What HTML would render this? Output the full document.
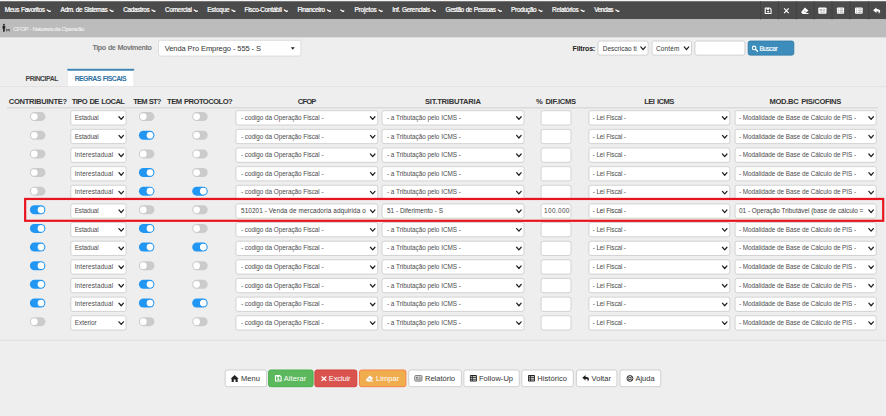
<!DOCTYPE html>
<html lang="pt-BR"><head><meta charset="utf-8"><title>CFOP - Natureza da Operação</title>
<style>
*{box-sizing:border-box;margin:0;padding:0}
html,body{width:886px;height:416px;overflow:hidden;background:#eee;font-family:"Liberation Sans",sans-serif}
body{position:relative}
#sh{position:absolute;left:0;top:0;width:886px;height:416px}
.t{position:absolute;white-space:nowrap;line-height:1}
</style></head><body>
<svg id="sh" width="886" height="416" viewBox="0 0 886 416">
<rect x="0.00" y="0.00" width="886.00" height="1.25" rx="0" fill="#f6f6f6"/>
<rect x="0.00" y="1.25" width="886.00" height="18.10" rx="0" fill="#4b4b4b"/>
<rect x="0.00" y="19.35" width="886.00" height="18.00" rx="0" fill="#bcbcbc"/>
<path d="M46.70 9.70 L49.40 11.30" stroke="#fff" stroke-width="1.25"/><path d="M50.60 9.90 L50.60 12.10 L47.90 12.10 Z" fill="#fff"/>
<path d="M109.50 9.70 L112.20 11.30" stroke="#fff" stroke-width="1.25"/><path d="M113.40 9.90 L113.40 12.10 L110.70 12.10 Z" fill="#fff"/>
<path d="M151.50 9.70 L154.20 11.30" stroke="#fff" stroke-width="1.25"/><path d="M155.40 9.90 L155.40 12.10 L152.70 12.10 Z" fill="#fff"/>
<path d="M193.70 9.70 L196.40 11.30" stroke="#fff" stroke-width="1.25"/><path d="M197.60 9.90 L197.60 12.10 L194.90 12.10 Z" fill="#fff"/>
<path d="M231.40 9.70 L234.10 11.30" stroke="#fff" stroke-width="1.25"/><path d="M235.30 9.90 L235.30 12.10 L232.60 12.10 Z" fill="#fff"/>
<path d="M283.80 9.70 L286.50 11.30" stroke="#fff" stroke-width="1.25"/><path d="M287.70 9.90 L287.70 12.10 L285.00 12.10 Z" fill="#fff"/>
<path d="M327.00 9.70 L329.70 11.30" stroke="#fff" stroke-width="1.25"/><path d="M330.90 9.90 L330.90 12.10 L328.20 12.10 Z" fill="#fff"/>
<path d="M340.30 9.70 L343.00 11.30" stroke="#fff" stroke-width="1.25"/><path d="M344.20 9.90 L344.20 12.10 L341.50 12.10 Z" fill="#fff"/>
<path d="M378.60 9.70 L381.30 11.30" stroke="#fff" stroke-width="1.25"/><path d="M382.50 9.90 L382.50 12.10 L379.80 12.10 Z" fill="#fff"/>
<path d="M432.00 9.70 L434.70 11.30" stroke="#fff" stroke-width="1.25"/><path d="M435.90 9.90 L435.90 12.10 L433.20 12.10 Z" fill="#fff"/>
<path d="M497.80 9.70 L500.50 11.30" stroke="#fff" stroke-width="1.25"/><path d="M501.70 9.90 L501.70 12.10 L499.00 12.10 Z" fill="#fff"/>
<path d="M538.50 9.70 L541.20 11.30" stroke="#fff" stroke-width="1.25"/><path d="M542.40 9.90 L542.40 12.10 L539.70 12.10 Z" fill="#fff"/>
<path d="M580.60 9.70 L583.30 11.30" stroke="#fff" stroke-width="1.25"/><path d="M584.50 9.90 L584.50 12.10 L581.80 12.10 Z" fill="#fff"/>
<path d="M615.40 9.70 L618.10 11.30" stroke="#fff" stroke-width="1.25"/><path d="M619.30 9.90 L619.30 12.10 L616.60 12.10 Z" fill="#fff"/>
<g transform="translate(764.70 7.40) scale(0.6900 0.6600)"><path d="M0.8 0.8 H7.2 L9.2 2.8 V9.2 H0.8 Z" fill="none" stroke="#fff" stroke-width="1.6" stroke-linejoin="round"/><rect x="2.8" y="1" width="3.6" height="2.6" fill="#fff"/><circle cx="5" cy="6.4" r="1.5" fill="#fff"/></g>
<g transform="translate(783.60 7.90) scale(0.5600 0.5700)"><path d="M0.9 0.9 L9.1 9.1 M9.1 0.9 L0.9 9.1" stroke="#fff" stroke-width="2.2"/></g>
<g transform="translate(801.00 7.60) scale(0.7400 0.6400)"><path d="M5.2 0 L10 4.6 L6.2 8.4 H10 V10 H2.4 L0 7.2 Z" fill="#fff"/><path d="M4.6 4.6 L6.4 6.2 L5.2 7.4 L3.4 5.8 Z" fill="#a8a8a8"/></g>
<g transform="translate(818.30 7.40) scale(0.8200 0.6400)"><rect x="0" y="0" width="10" height="10" rx="1.4" fill="#fff"/><rect x="1.8" y="2.4" width="2.6" height="2.8" fill="#a8a8a8"/><path d="M5.4 3 H8.4 M5.4 5 H8.4 M1.8 7.4 H8.4" stroke="#a8a8a8" stroke-width="1"/></g>
<g transform="translate(836.90 7.40) scale(0.7200 0.6400)"><rect x="0" y="0" width="10" height="10" rx="1.2" fill="#fff"/><path d="M4 2.4 H8.8 M4 5 H8.8 M4 7.6 H8.8" stroke="#a8a8a8" stroke-width="1.3"/><path d="M1.2 2.4 H2.8 M1.2 5 H2.8 M1.2 7.6 H2.8" stroke="#a8a8a8" stroke-width="1.3"/></g>
<g transform="translate(855.00 7.40) scale(0.7700 0.6400)"><rect x="0" y="0" width="10" height="10" rx="1.2" fill="#fff"/><path d="M4 2.4 H8.8 M4 5 H8.8 M4 7.6 H8.8" stroke="#a8a8a8" stroke-width="1.3"/><path d="M1.2 2.4 H2.8 M1.2 5 H2.8 M1.2 7.6 H2.8" stroke="#a8a8a8" stroke-width="1.3"/></g>
<g transform="translate(873.10 7.40) scale(0.7800 0.6600)"><path d="M4.4 0 L0 4.2 L4.4 8.4 V5.9 C6.9 5.9 7.9 6.8 7.2 10 C10.6 7 9.6 2.6 4.4 2.6 Z" fill="#fff"/></g>
<rect x="760.00" y="1.25" width="1.00" height="18.10" rx="0" fill="#434343"/>
<rect x="778.00" y="1.25" width="1.00" height="18.10" rx="0" fill="#434343"/>
<rect x="795.80" y="1.25" width="1.00" height="18.10" rx="0" fill="#434343"/>
<rect x="813.60" y="1.25" width="1.00" height="18.10" rx="0" fill="#434343"/>
<rect x="831.50" y="1.25" width="1.00" height="18.10" rx="0" fill="#434343"/>
<rect x="849.60" y="1.25" width="1.00" height="18.10" rx="0" fill="#434343"/>
<rect x="868.20" y="1.25" width="1.00" height="18.10" rx="0" fill="#434343"/>
<g transform="translate(2 23.8)"><circle cx="1.9" cy="0.9" r="0.9" fill="#222"/><path d="M0.6 2 H3.2 V5 H2.7 V8 H1.1 V5 H0.6 Z" fill="#222"/><path d="M4.6 7.6 V5.2 L5.9 6.8 L7.2 5.2 V7.6" fill="none" stroke="#333" stroke-width="0.7"/></g>
<rect x="158.50" y="40.30" width="142.40" height="15.80" rx="2" fill="#fff" stroke="#dcdcdc" stroke-width="1"/>
<path d="M290.8 47.3 H294.8 L292.8 49.7 Z" fill="#222"/>
<rect x="598.00" y="41.00" width="50.10" height="14.10" rx="2" fill="#fff" stroke="#d2d2d2" stroke-width="1"/>
<path d="M640.85 46.95 L643.10 49.55 L645.35 46.95" fill="none" stroke="#222" stroke-width="1.25" stroke-linecap="round" stroke-linejoin="round"/>
<rect x="652.00" y="41.00" width="39.50" height="14.10" rx="2" fill="#fff" stroke="#d2d2d2" stroke-width="1"/>
<path d="M684.25 46.95 L686.50 49.55 L688.75 46.95" fill="none" stroke="#222" stroke-width="1.25" stroke-linecap="round" stroke-linejoin="round"/>
<rect x="694.90" y="41.00" width="50.00" height="14.10" rx="2" fill="#fff" stroke="#d2d2d2" stroke-width="1"/>
<rect x="748.20" y="41.10" width="45.60" height="14.00" rx="2" fill="#3c8dbc" stroke="#367fa9" stroke-width="1"/>
<g transform="translate(751.6 45.4) scale(1.1)"><circle cx="2.3" cy="2.3" r="1.6" fill="none" stroke="#fff" stroke-width="1"/><path d="M3.5 3.5L5.4 5.4" stroke="#fff" stroke-width="1.2" stroke-linecap="round"/></g>
<rect x="0.00" y="86.00" width="886.00" height="1.00" rx="0" fill="#e2e2e2"/>
<rect x="67.30" y="68.80" width="66.90" height="17.40" rx="0" fill="#fff"/>
<rect x="67.30" y="68.80" width="66.90" height="1.90" rx="0" fill="#3a82b0"/>
<rect x="67.30" y="70.70" width="0.80" height="15.30" rx="0" fill="#e6e6e6"/>
<rect x="133.40" y="70.70" width="0.80" height="15.30" rx="0" fill="#e6e6e6"/>
<rect x="7.00" y="107.00" width="871.00" height="1.60" rx="0" fill="#dcdcdc"/>
<rect x="29.90" y="112.10" width="15.50" height="9.00" rx="4.5" fill="#cbcbcb"/>
<circle cx="34.30" cy="116.60" r="3.35" fill="#fff"/>
<rect x="70.80" y="110.70" width="55.30" height="14.30" rx="2" fill="#fff" stroke="#d2d2d2" stroke-width="1"/>
<path d="M118.95 116.75 L121.20 119.35 L123.45 116.75" fill="none" stroke="#222" stroke-width="1.25" stroke-linecap="round" stroke-linejoin="round"/>
<rect x="138.90" y="112.10" width="15.50" height="9.00" rx="4.5" fill="#cbcbcb"/>
<circle cx="143.30" cy="116.60" r="3.35" fill="#fff"/>
<rect x="192.20" y="112.10" width="15.50" height="9.00" rx="4.5" fill="#cbcbcb"/>
<circle cx="196.60" cy="116.60" r="3.35" fill="#fff"/>
<rect x="235.90" y="110.70" width="141.90" height="14.30" rx="2" fill="#fff" stroke="#d2d2d2" stroke-width="1"/>
<path d="M370.45 116.75 L372.70 119.35 L374.95 116.75" fill="none" stroke="#222" stroke-width="1.25" stroke-linecap="round" stroke-linejoin="round"/>
<rect x="382.00" y="110.70" width="142.00" height="14.30" rx="2" fill="#fff" stroke="#d2d2d2" stroke-width="1"/>
<path d="M516.65 116.75 L518.90 119.35 L521.15 116.75" fill="none" stroke="#222" stroke-width="1.25" stroke-linecap="round" stroke-linejoin="round"/>
<rect x="541.10" y="110.70" width="29.90" height="14.30" rx="2" fill="#fff" stroke="#d2d2d2" stroke-width="1"/>
<rect x="588.90" y="110.70" width="140.90" height="14.30" rx="2" fill="#fff" stroke="#d2d2d2" stroke-width="1"/>
<path d="M722.45 116.75 L724.70 119.35 L726.95 116.75" fill="none" stroke="#222" stroke-width="1.25" stroke-linecap="round" stroke-linejoin="round"/>
<rect x="735.10" y="110.70" width="141.10" height="14.30" rx="2" fill="#fff" stroke="#d2d2d2" stroke-width="1"/>
<path d="M868.85 116.75 L871.10 119.35 L873.35 116.75" fill="none" stroke="#222" stroke-width="1.25" stroke-linecap="round" stroke-linejoin="round"/>
<rect x="29.90" y="130.74" width="15.50" height="9.00" rx="4.5" fill="#cbcbcb"/>
<circle cx="34.30" cy="135.24" r="3.35" fill="#fff"/>
<rect x="70.80" y="129.34" width="55.30" height="14.30" rx="2" fill="#fff" stroke="#d2d2d2" stroke-width="1"/>
<path d="M118.95 135.39 L121.20 137.99 L123.45 135.39" fill="none" stroke="#222" stroke-width="1.25" stroke-linecap="round" stroke-linejoin="round"/>
<rect x="138.90" y="130.74" width="15.50" height="9.00" rx="4.5" fill="#2196f3"/>
<circle cx="150.00" cy="135.24" r="3.35" fill="#fff"/>
<rect x="192.20" y="130.74" width="15.50" height="9.00" rx="4.5" fill="#cbcbcb"/>
<circle cx="196.60" cy="135.24" r="3.35" fill="#fff"/>
<rect x="235.90" y="129.34" width="141.90" height="14.30" rx="2" fill="#fff" stroke="#d2d2d2" stroke-width="1"/>
<path d="M370.45 135.39 L372.70 137.99 L374.95 135.39" fill="none" stroke="#222" stroke-width="1.25" stroke-linecap="round" stroke-linejoin="round"/>
<rect x="382.00" y="129.34" width="142.00" height="14.30" rx="2" fill="#fff" stroke="#d2d2d2" stroke-width="1"/>
<path d="M516.65 135.39 L518.90 137.99 L521.15 135.39" fill="none" stroke="#222" stroke-width="1.25" stroke-linecap="round" stroke-linejoin="round"/>
<rect x="541.10" y="129.34" width="29.90" height="14.30" rx="2" fill="#fff" stroke="#d2d2d2" stroke-width="1"/>
<rect x="588.90" y="129.34" width="140.90" height="14.30" rx="2" fill="#fff" stroke="#d2d2d2" stroke-width="1"/>
<path d="M722.45 135.39 L724.70 137.99 L726.95 135.39" fill="none" stroke="#222" stroke-width="1.25" stroke-linecap="round" stroke-linejoin="round"/>
<rect x="735.10" y="129.34" width="141.10" height="14.30" rx="2" fill="#fff" stroke="#d2d2d2" stroke-width="1"/>
<path d="M868.85 135.39 L871.10 137.99 L873.35 135.39" fill="none" stroke="#222" stroke-width="1.25" stroke-linecap="round" stroke-linejoin="round"/>
<rect x="29.90" y="149.38" width="15.50" height="9.00" rx="4.5" fill="#cbcbcb"/>
<circle cx="34.30" cy="153.88" r="3.35" fill="#fff"/>
<rect x="70.80" y="147.98" width="55.30" height="14.30" rx="2" fill="#fff" stroke="#d2d2d2" stroke-width="1"/>
<path d="M118.95 154.03 L121.20 156.63 L123.45 154.03" fill="none" stroke="#222" stroke-width="1.25" stroke-linecap="round" stroke-linejoin="round"/>
<rect x="138.90" y="149.38" width="15.50" height="9.00" rx="4.5" fill="#cbcbcb"/>
<circle cx="143.30" cy="153.88" r="3.35" fill="#fff"/>
<rect x="192.20" y="149.38" width="15.50" height="9.00" rx="4.5" fill="#cbcbcb"/>
<circle cx="196.60" cy="153.88" r="3.35" fill="#fff"/>
<rect x="235.90" y="147.98" width="141.90" height="14.30" rx="2" fill="#fff" stroke="#d2d2d2" stroke-width="1"/>
<path d="M370.45 154.03 L372.70 156.63 L374.95 154.03" fill="none" stroke="#222" stroke-width="1.25" stroke-linecap="round" stroke-linejoin="round"/>
<rect x="382.00" y="147.98" width="142.00" height="14.30" rx="2" fill="#fff" stroke="#d2d2d2" stroke-width="1"/>
<path d="M516.65 154.03 L518.90 156.63 L521.15 154.03" fill="none" stroke="#222" stroke-width="1.25" stroke-linecap="round" stroke-linejoin="round"/>
<rect x="541.10" y="147.98" width="29.90" height="14.30" rx="2" fill="#fff" stroke="#d2d2d2" stroke-width="1"/>
<rect x="588.90" y="147.98" width="140.90" height="14.30" rx="2" fill="#fff" stroke="#d2d2d2" stroke-width="1"/>
<path d="M722.45 154.03 L724.70 156.63 L726.95 154.03" fill="none" stroke="#222" stroke-width="1.25" stroke-linecap="round" stroke-linejoin="round"/>
<rect x="735.10" y="147.98" width="141.10" height="14.30" rx="2" fill="#fff" stroke="#d2d2d2" stroke-width="1"/>
<path d="M868.85 154.03 L871.10 156.63 L873.35 154.03" fill="none" stroke="#222" stroke-width="1.25" stroke-linecap="round" stroke-linejoin="round"/>
<rect x="29.90" y="168.02" width="15.50" height="9.00" rx="4.5" fill="#cbcbcb"/>
<circle cx="34.30" cy="172.52" r="3.35" fill="#fff"/>
<rect x="70.80" y="166.62" width="55.30" height="14.30" rx="2" fill="#fff" stroke="#d2d2d2" stroke-width="1"/>
<path d="M118.95 172.67 L121.20 175.27 L123.45 172.67" fill="none" stroke="#222" stroke-width="1.25" stroke-linecap="round" stroke-linejoin="round"/>
<rect x="138.90" y="168.02" width="15.50" height="9.00" rx="4.5" fill="#2196f3"/>
<circle cx="150.00" cy="172.52" r="3.35" fill="#fff"/>
<rect x="192.20" y="168.02" width="15.50" height="9.00" rx="4.5" fill="#cbcbcb"/>
<circle cx="196.60" cy="172.52" r="3.35" fill="#fff"/>
<rect x="235.90" y="166.62" width="141.90" height="14.30" rx="2" fill="#fff" stroke="#d2d2d2" stroke-width="1"/>
<path d="M370.45 172.67 L372.70 175.27 L374.95 172.67" fill="none" stroke="#222" stroke-width="1.25" stroke-linecap="round" stroke-linejoin="round"/>
<rect x="382.00" y="166.62" width="142.00" height="14.30" rx="2" fill="#fff" stroke="#d2d2d2" stroke-width="1"/>
<path d="M516.65 172.67 L518.90 175.27 L521.15 172.67" fill="none" stroke="#222" stroke-width="1.25" stroke-linecap="round" stroke-linejoin="round"/>
<rect x="541.10" y="166.62" width="29.90" height="14.30" rx="2" fill="#fff" stroke="#d2d2d2" stroke-width="1"/>
<rect x="588.90" y="166.62" width="140.90" height="14.30" rx="2" fill="#fff" stroke="#d2d2d2" stroke-width="1"/>
<path d="M722.45 172.67 L724.70 175.27 L726.95 172.67" fill="none" stroke="#222" stroke-width="1.25" stroke-linecap="round" stroke-linejoin="round"/>
<rect x="735.10" y="166.62" width="141.10" height="14.30" rx="2" fill="#fff" stroke="#d2d2d2" stroke-width="1"/>
<path d="M868.85 172.67 L871.10 175.27 L873.35 172.67" fill="none" stroke="#222" stroke-width="1.25" stroke-linecap="round" stroke-linejoin="round"/>
<rect x="29.90" y="186.66" width="15.50" height="9.00" rx="4.5" fill="#cbcbcb"/>
<circle cx="34.30" cy="191.16" r="3.35" fill="#fff"/>
<rect x="70.80" y="185.26" width="55.30" height="14.30" rx="2" fill="#fff" stroke="#d2d2d2" stroke-width="1"/>
<path d="M118.95 191.31 L121.20 193.91 L123.45 191.31" fill="none" stroke="#222" stroke-width="1.25" stroke-linecap="round" stroke-linejoin="round"/>
<rect x="138.90" y="186.66" width="15.50" height="9.00" rx="4.5" fill="#2196f3"/>
<circle cx="150.00" cy="191.16" r="3.35" fill="#fff"/>
<rect x="192.20" y="186.66" width="15.50" height="9.00" rx="4.5" fill="#2196f3"/>
<circle cx="203.30" cy="191.16" r="3.35" fill="#fff"/>
<rect x="235.90" y="185.26" width="141.90" height="14.30" rx="2" fill="#fff" stroke="#d2d2d2" stroke-width="1"/>
<path d="M370.45 191.31 L372.70 193.91 L374.95 191.31" fill="none" stroke="#222" stroke-width="1.25" stroke-linecap="round" stroke-linejoin="round"/>
<rect x="382.00" y="185.26" width="142.00" height="14.30" rx="2" fill="#fff" stroke="#d2d2d2" stroke-width="1"/>
<path d="M516.65 191.31 L518.90 193.91 L521.15 191.31" fill="none" stroke="#222" stroke-width="1.25" stroke-linecap="round" stroke-linejoin="round"/>
<rect x="541.10" y="185.26" width="29.90" height="14.30" rx="2" fill="#fff" stroke="#d2d2d2" stroke-width="1"/>
<rect x="588.90" y="185.26" width="140.90" height="14.30" rx="2" fill="#fff" stroke="#d2d2d2" stroke-width="1"/>
<path d="M722.45 191.31 L724.70 193.91 L726.95 191.31" fill="none" stroke="#222" stroke-width="1.25" stroke-linecap="round" stroke-linejoin="round"/>
<rect x="735.10" y="185.26" width="141.10" height="14.30" rx="2" fill="#fff" stroke="#d2d2d2" stroke-width="1"/>
<path d="M868.85 191.31 L871.10 193.91 L873.35 191.31" fill="none" stroke="#222" stroke-width="1.25" stroke-linecap="round" stroke-linejoin="round"/>
<rect x="29.90" y="205.30" width="15.50" height="9.00" rx="4.5" fill="#2196f3"/>
<circle cx="41.00" cy="209.80" r="3.35" fill="#fff"/>
<rect x="70.80" y="203.90" width="55.30" height="14.30" rx="2" fill="#fff" stroke="#d2d2d2" stroke-width="1"/>
<path d="M118.95 209.95 L121.20 212.55 L123.45 209.95" fill="none" stroke="#222" stroke-width="1.25" stroke-linecap="round" stroke-linejoin="round"/>
<rect x="138.90" y="205.30" width="15.50" height="9.00" rx="4.5" fill="#cbcbcb"/>
<circle cx="143.30" cy="209.80" r="3.35" fill="#fff"/>
<rect x="192.20" y="205.30" width="15.50" height="9.00" rx="4.5" fill="#cbcbcb"/>
<circle cx="196.60" cy="209.80" r="3.35" fill="#fff"/>
<rect x="235.90" y="203.90" width="141.90" height="14.30" rx="2" fill="#fff" stroke="#d2d2d2" stroke-width="1"/>
<path d="M370.45 209.95 L372.70 212.55 L374.95 209.95" fill="none" stroke="#222" stroke-width="1.25" stroke-linecap="round" stroke-linejoin="round"/>
<rect x="382.00" y="203.90" width="142.00" height="14.30" rx="2" fill="#fff" stroke="#d2d2d2" stroke-width="1"/>
<path d="M516.65 209.95 L518.90 212.55 L521.15 209.95" fill="none" stroke="#222" stroke-width="1.25" stroke-linecap="round" stroke-linejoin="round"/>
<rect x="541.10" y="203.90" width="29.90" height="14.30" rx="2" fill="#fff" stroke="#d2d2d2" stroke-width="1"/>
<rect x="588.90" y="203.90" width="140.90" height="14.30" rx="2" fill="#fff" stroke="#d2d2d2" stroke-width="1"/>
<path d="M722.45 209.95 L724.70 212.55 L726.95 209.95" fill="none" stroke="#222" stroke-width="1.25" stroke-linecap="round" stroke-linejoin="round"/>
<rect x="735.10" y="203.90" width="141.10" height="14.30" rx="2" fill="#fff" stroke="#d2d2d2" stroke-width="1"/>
<path d="M868.85 209.95 L871.10 212.55 L873.35 209.95" fill="none" stroke="#222" stroke-width="1.25" stroke-linecap="round" stroke-linejoin="round"/>
<rect x="29.90" y="223.94" width="15.50" height="9.00" rx="4.5" fill="#2196f3"/>
<circle cx="41.00" cy="228.44" r="3.35" fill="#fff"/>
<rect x="70.80" y="222.54" width="55.30" height="14.30" rx="2" fill="#fff" stroke="#d2d2d2" stroke-width="1"/>
<path d="M118.95 228.59 L121.20 231.19 L123.45 228.59" fill="none" stroke="#222" stroke-width="1.25" stroke-linecap="round" stroke-linejoin="round"/>
<rect x="138.90" y="223.94" width="15.50" height="9.00" rx="4.5" fill="#2196f3"/>
<circle cx="150.00" cy="228.44" r="3.35" fill="#fff"/>
<rect x="192.20" y="223.94" width="15.50" height="9.00" rx="4.5" fill="#cbcbcb"/>
<circle cx="196.60" cy="228.44" r="3.35" fill="#fff"/>
<rect x="235.90" y="222.54" width="141.90" height="14.30" rx="2" fill="#fff" stroke="#d2d2d2" stroke-width="1"/>
<path d="M370.45 228.59 L372.70 231.19 L374.95 228.59" fill="none" stroke="#222" stroke-width="1.25" stroke-linecap="round" stroke-linejoin="round"/>
<rect x="382.00" y="222.54" width="142.00" height="14.30" rx="2" fill="#fff" stroke="#d2d2d2" stroke-width="1"/>
<path d="M516.65 228.59 L518.90 231.19 L521.15 228.59" fill="none" stroke="#222" stroke-width="1.25" stroke-linecap="round" stroke-linejoin="round"/>
<rect x="541.10" y="222.54" width="29.90" height="14.30" rx="2" fill="#fff" stroke="#d2d2d2" stroke-width="1"/>
<rect x="588.90" y="222.54" width="140.90" height="14.30" rx="2" fill="#fff" stroke="#d2d2d2" stroke-width="1"/>
<path d="M722.45 228.59 L724.70 231.19 L726.95 228.59" fill="none" stroke="#222" stroke-width="1.25" stroke-linecap="round" stroke-linejoin="round"/>
<rect x="735.10" y="222.54" width="141.10" height="14.30" rx="2" fill="#fff" stroke="#d2d2d2" stroke-width="1"/>
<path d="M868.85 228.59 L871.10 231.19 L873.35 228.59" fill="none" stroke="#222" stroke-width="1.25" stroke-linecap="round" stroke-linejoin="round"/>
<rect x="29.90" y="242.58" width="15.50" height="9.00" rx="4.5" fill="#2196f3"/>
<circle cx="41.00" cy="247.08" r="3.35" fill="#fff"/>
<rect x="70.80" y="241.18" width="55.30" height="14.30" rx="2" fill="#fff" stroke="#d2d2d2" stroke-width="1"/>
<path d="M118.95 247.23 L121.20 249.83 L123.45 247.23" fill="none" stroke="#222" stroke-width="1.25" stroke-linecap="round" stroke-linejoin="round"/>
<rect x="138.90" y="242.58" width="15.50" height="9.00" rx="4.5" fill="#2196f3"/>
<circle cx="150.00" cy="247.08" r="3.35" fill="#fff"/>
<rect x="192.20" y="242.58" width="15.50" height="9.00" rx="4.5" fill="#2196f3"/>
<circle cx="203.30" cy="247.08" r="3.35" fill="#fff"/>
<rect x="235.90" y="241.18" width="141.90" height="14.30" rx="2" fill="#fff" stroke="#d2d2d2" stroke-width="1"/>
<path d="M370.45 247.23 L372.70 249.83 L374.95 247.23" fill="none" stroke="#222" stroke-width="1.25" stroke-linecap="round" stroke-linejoin="round"/>
<rect x="382.00" y="241.18" width="142.00" height="14.30" rx="2" fill="#fff" stroke="#d2d2d2" stroke-width="1"/>
<path d="M516.65 247.23 L518.90 249.83 L521.15 247.23" fill="none" stroke="#222" stroke-width="1.25" stroke-linecap="round" stroke-linejoin="round"/>
<rect x="541.10" y="241.18" width="29.90" height="14.30" rx="2" fill="#fff" stroke="#d2d2d2" stroke-width="1"/>
<rect x="588.90" y="241.18" width="140.90" height="14.30" rx="2" fill="#fff" stroke="#d2d2d2" stroke-width="1"/>
<path d="M722.45 247.23 L724.70 249.83 L726.95 247.23" fill="none" stroke="#222" stroke-width="1.25" stroke-linecap="round" stroke-linejoin="round"/>
<rect x="735.10" y="241.18" width="141.10" height="14.30" rx="2" fill="#fff" stroke="#d2d2d2" stroke-width="1"/>
<path d="M868.85 247.23 L871.10 249.83 L873.35 247.23" fill="none" stroke="#222" stroke-width="1.25" stroke-linecap="round" stroke-linejoin="round"/>
<rect x="29.90" y="261.22" width="15.50" height="9.00" rx="4.5" fill="#2196f3"/>
<circle cx="41.00" cy="265.72" r="3.35" fill="#fff"/>
<rect x="70.80" y="259.82" width="55.30" height="14.30" rx="2" fill="#fff" stroke="#d2d2d2" stroke-width="1"/>
<path d="M118.95 265.87 L121.20 268.47 L123.45 265.87" fill="none" stroke="#222" stroke-width="1.25" stroke-linecap="round" stroke-linejoin="round"/>
<rect x="138.90" y="261.22" width="15.50" height="9.00" rx="4.5" fill="#cbcbcb"/>
<circle cx="143.30" cy="265.72" r="3.35" fill="#fff"/>
<rect x="192.20" y="261.22" width="15.50" height="9.00" rx="4.5" fill="#cbcbcb"/>
<circle cx="196.60" cy="265.72" r="3.35" fill="#fff"/>
<rect x="235.90" y="259.82" width="141.90" height="14.30" rx="2" fill="#fff" stroke="#d2d2d2" stroke-width="1"/>
<path d="M370.45 265.87 L372.70 268.47 L374.95 265.87" fill="none" stroke="#222" stroke-width="1.25" stroke-linecap="round" stroke-linejoin="round"/>
<rect x="382.00" y="259.82" width="142.00" height="14.30" rx="2" fill="#fff" stroke="#d2d2d2" stroke-width="1"/>
<path d="M516.65 265.87 L518.90 268.47 L521.15 265.87" fill="none" stroke="#222" stroke-width="1.25" stroke-linecap="round" stroke-linejoin="round"/>
<rect x="541.10" y="259.82" width="29.90" height="14.30" rx="2" fill="#fff" stroke="#d2d2d2" stroke-width="1"/>
<rect x="588.90" y="259.82" width="140.90" height="14.30" rx="2" fill="#fff" stroke="#d2d2d2" stroke-width="1"/>
<path d="M722.45 265.87 L724.70 268.47 L726.95 265.87" fill="none" stroke="#222" stroke-width="1.25" stroke-linecap="round" stroke-linejoin="round"/>
<rect x="735.10" y="259.82" width="141.10" height="14.30" rx="2" fill="#fff" stroke="#d2d2d2" stroke-width="1"/>
<path d="M868.85 265.87 L871.10 268.47 L873.35 265.87" fill="none" stroke="#222" stroke-width="1.25" stroke-linecap="round" stroke-linejoin="round"/>
<rect x="29.90" y="279.86" width="15.50" height="9.00" rx="4.5" fill="#2196f3"/>
<circle cx="41.00" cy="284.36" r="3.35" fill="#fff"/>
<rect x="70.80" y="278.46" width="55.30" height="14.30" rx="2" fill="#fff" stroke="#d2d2d2" stroke-width="1"/>
<path d="M118.95 284.51 L121.20 287.11 L123.45 284.51" fill="none" stroke="#222" stroke-width="1.25" stroke-linecap="round" stroke-linejoin="round"/>
<rect x="138.90" y="279.86" width="15.50" height="9.00" rx="4.5" fill="#2196f3"/>
<circle cx="150.00" cy="284.36" r="3.35" fill="#fff"/>
<rect x="192.20" y="279.86" width="15.50" height="9.00" rx="4.5" fill="#cbcbcb"/>
<circle cx="196.60" cy="284.36" r="3.35" fill="#fff"/>
<rect x="235.90" y="278.46" width="141.90" height="14.30" rx="2" fill="#fff" stroke="#d2d2d2" stroke-width="1"/>
<path d="M370.45 284.51 L372.70 287.11 L374.95 284.51" fill="none" stroke="#222" stroke-width="1.25" stroke-linecap="round" stroke-linejoin="round"/>
<rect x="382.00" y="278.46" width="142.00" height="14.30" rx="2" fill="#fff" stroke="#d2d2d2" stroke-width="1"/>
<path d="M516.65 284.51 L518.90 287.11 L521.15 284.51" fill="none" stroke="#222" stroke-width="1.25" stroke-linecap="round" stroke-linejoin="round"/>
<rect x="541.10" y="278.46" width="29.90" height="14.30" rx="2" fill="#fff" stroke="#d2d2d2" stroke-width="1"/>
<rect x="588.90" y="278.46" width="140.90" height="14.30" rx="2" fill="#fff" stroke="#d2d2d2" stroke-width="1"/>
<path d="M722.45 284.51 L724.70 287.11 L726.95 284.51" fill="none" stroke="#222" stroke-width="1.25" stroke-linecap="round" stroke-linejoin="round"/>
<rect x="735.10" y="278.46" width="141.10" height="14.30" rx="2" fill="#fff" stroke="#d2d2d2" stroke-width="1"/>
<path d="M868.85 284.51 L871.10 287.11 L873.35 284.51" fill="none" stroke="#222" stroke-width="1.25" stroke-linecap="round" stroke-linejoin="round"/>
<rect x="29.90" y="298.50" width="15.50" height="9.00" rx="4.5" fill="#2196f3"/>
<circle cx="41.00" cy="303.00" r="3.35" fill="#fff"/>
<rect x="70.80" y="297.10" width="55.30" height="14.30" rx="2" fill="#fff" stroke="#d2d2d2" stroke-width="1"/>
<path d="M118.95 303.15 L121.20 305.75 L123.45 303.15" fill="none" stroke="#222" stroke-width="1.25" stroke-linecap="round" stroke-linejoin="round"/>
<rect x="138.90" y="298.50" width="15.50" height="9.00" rx="4.5" fill="#2196f3"/>
<circle cx="150.00" cy="303.00" r="3.35" fill="#fff"/>
<rect x="192.20" y="298.50" width="15.50" height="9.00" rx="4.5" fill="#2196f3"/>
<circle cx="203.30" cy="303.00" r="3.35" fill="#fff"/>
<rect x="235.90" y="297.10" width="141.90" height="14.30" rx="2" fill="#fff" stroke="#d2d2d2" stroke-width="1"/>
<path d="M370.45 303.15 L372.70 305.75 L374.95 303.15" fill="none" stroke="#222" stroke-width="1.25" stroke-linecap="round" stroke-linejoin="round"/>
<rect x="382.00" y="297.10" width="142.00" height="14.30" rx="2" fill="#fff" stroke="#d2d2d2" stroke-width="1"/>
<path d="M516.65 303.15 L518.90 305.75 L521.15 303.15" fill="none" stroke="#222" stroke-width="1.25" stroke-linecap="round" stroke-linejoin="round"/>
<rect x="541.10" y="297.10" width="29.90" height="14.30" rx="2" fill="#fff" stroke="#d2d2d2" stroke-width="1"/>
<rect x="588.90" y="297.10" width="140.90" height="14.30" rx="2" fill="#fff" stroke="#d2d2d2" stroke-width="1"/>
<path d="M722.45 303.15 L724.70 305.75 L726.95 303.15" fill="none" stroke="#222" stroke-width="1.25" stroke-linecap="round" stroke-linejoin="round"/>
<rect x="735.10" y="297.10" width="141.10" height="14.30" rx="2" fill="#fff" stroke="#d2d2d2" stroke-width="1"/>
<path d="M868.85 303.15 L871.10 305.75 L873.35 303.15" fill="none" stroke="#222" stroke-width="1.25" stroke-linecap="round" stroke-linejoin="round"/>
<rect x="29.90" y="317.14" width="15.50" height="9.00" rx="4.5" fill="#cbcbcb"/>
<circle cx="34.30" cy="321.64" r="3.35" fill="#fff"/>
<rect x="70.80" y="315.74" width="55.30" height="14.30" rx="2" fill="#fff" stroke="#d2d2d2" stroke-width="1"/>
<path d="M118.95 321.79 L121.20 324.39 L123.45 321.79" fill="none" stroke="#222" stroke-width="1.25" stroke-linecap="round" stroke-linejoin="round"/>
<rect x="138.90" y="317.14" width="15.50" height="9.00" rx="4.5" fill="#cbcbcb"/>
<circle cx="143.30" cy="321.64" r="3.35" fill="#fff"/>
<rect x="192.20" y="317.14" width="15.50" height="9.00" rx="4.5" fill="#cbcbcb"/>
<circle cx="196.60" cy="321.64" r="3.35" fill="#fff"/>
<rect x="235.90" y="315.74" width="141.90" height="14.30" rx="2" fill="#fff" stroke="#d2d2d2" stroke-width="1"/>
<path d="M370.45 321.79 L372.70 324.39 L374.95 321.79" fill="none" stroke="#222" stroke-width="1.25" stroke-linecap="round" stroke-linejoin="round"/>
<rect x="382.00" y="315.74" width="142.00" height="14.30" rx="2" fill="#fff" stroke="#d2d2d2" stroke-width="1"/>
<path d="M516.65 321.79 L518.90 324.39 L521.15 321.79" fill="none" stroke="#222" stroke-width="1.25" stroke-linecap="round" stroke-linejoin="round"/>
<rect x="541.10" y="315.74" width="29.90" height="14.30" rx="2" fill="#fff" stroke="#d2d2d2" stroke-width="1"/>
<rect x="588.90" y="315.74" width="140.90" height="14.30" rx="2" fill="#fff" stroke="#d2d2d2" stroke-width="1"/>
<path d="M722.45 321.79 L724.70 324.39 L726.95 321.79" fill="none" stroke="#222" stroke-width="1.25" stroke-linecap="round" stroke-linejoin="round"/>
<rect x="735.10" y="315.74" width="141.10" height="14.30" rx="2" fill="#fff" stroke="#d2d2d2" stroke-width="1"/>
<path d="M868.85 321.79 L871.10 324.39 L873.35 321.79" fill="none" stroke="#222" stroke-width="1.25" stroke-linecap="round" stroke-linejoin="round"/>
<rect x="25.15" y="198.95" width="858.05" height="21.85" rx="0" fill="none" stroke="#e8141e" stroke-width="2.2"/>
<rect x="0.00" y="339.80" width="886.00" height="1.00" rx="0" fill="#e0e0e0"/>
<rect x="225.20" y="370.00" width="41.40" height="16.70" rx="2" fill="#fff" stroke="#cfcfcf" stroke-width="1"/>
<g transform="translate(230.60 374.90) scale(0.8100 0.7000)"><path d="M0 5.4 L5 0 L10 5.4 L8.7 5.4 L8.7 10 L6.1 10 L6.1 6.6 L3.9 6.6 L3.9 10 L1.3 10 L1.3 5.4 Z" fill="#222"/></g>
<rect x="268.60" y="370.00" width="44.50" height="16.70" rx="2" fill="#5cb85c" stroke="#4cae4c" stroke-width="1"/>
<g transform="translate(274.90 375.10) scale(0.6800 0.6500)"><path d="M0.8 0.8 H7.2 L9.2 2.8 V9.2 H0.8 Z" fill="none" stroke="#fff" stroke-width="1.6" stroke-linejoin="round"/><rect x="2.8" y="1" width="3.6" height="2.6" fill="#fff"/><circle cx="5" cy="6.4" r="1.5" fill="#fff"/></g>
<rect x="314.90" y="370.00" width="41.90" height="16.70" rx="2" fill="#d9534f" stroke="#d43f3a" stroke-width="1"/>
<g transform="translate(321.00 376.00) scale(0.5800 0.5400)"><path d="M0.9 0.9 L9.1 9.1 M9.1 0.9 L0.9 9.1" stroke="#fff" stroke-width="2.2"/></g>
<rect x="359.50" y="370.00" width="46.40" height="16.70" rx="2" fill="#f0ad4e" stroke="#f4824a" stroke-width="1"/>
<g transform="translate(365.70 375.50) scale(0.7500 0.6100)"><path d="M5.2 0 L10 4.6 L6.2 8.4 H10 V10 H2.4 L0 7.2 Z" fill="#fff"/><path d="M4.6 4.6 L6.4 6.2 L5.2 7.4 L3.4 5.8 Z" fill="#a8a8a8"/></g>
<rect x="408.70" y="370.00" width="52.70" height="16.70" rx="2" fill="#fff" stroke="#cfcfcf" stroke-width="1"/>
<g transform="translate(414.30 375.10) scale(0.8100 0.6500)"><rect x="0.6" y="0.8" width="8.8" height="8.4" rx="1.2" fill="#e8e8e8" stroke="#666" stroke-width="1.2"/><rect x="2.2" y="2.8" width="2.2" height="2.4" fill="#666"/><path d="M5.4 3.2 H8 M5.4 5 H8 M2.2 7 H8" stroke="#666" stroke-width="0.9"/></g>
<rect x="463.90" y="370.00" width="55.40" height="16.70" rx="2" fill="#fff" stroke="#cfcfcf" stroke-width="1"/>
<g transform="translate(469.90 375.10) scale(0.7000 0.6500)"><rect x="0" y="0" width="10" height="10" rx="1.2" fill="#222"/><path d="M4 2.4 H8.8 M4 5 H8.8 M4 7.6 H8.8" stroke="#f4f4f4" stroke-width="1.3"/><path d="M1.2 2.4 H2.8 M1.2 5 H2.8 M1.2 7.6 H2.8" stroke="#f4f4f4" stroke-width="1.3"/></g>
<rect x="521.80" y="370.00" width="51.50" height="16.70" rx="2" fill="#fff" stroke="#cfcfcf" stroke-width="1"/>
<g transform="translate(528.00 375.10) scale(0.7000 0.6500)"><rect x="0" y="0" width="10" height="10" rx="1.2" fill="#222"/><path d="M4 2.4 H8.8 M4 5 H8.8 M4 7.6 H8.8" stroke="#f4f4f4" stroke-width="1.3"/><path d="M1.2 2.4 H2.8 M1.2 5 H2.8 M1.2 7.6 H2.8" stroke="#f4f4f4" stroke-width="1.3"/></g>
<rect x="576.40" y="370.00" width="40.50" height="16.70" rx="2" fill="#fff" stroke="#cfcfcf" stroke-width="1"/>
<g transform="translate(582.30 375.10) scale(0.7300 0.6500)"><path d="M4.4 0 L0 4.2 L4.4 8.4 V5.9 C6.9 5.9 7.9 6.8 7.2 10 C10.6 7 9.6 2.6 4.4 2.6 Z" fill="#222"/></g>
<rect x="620.00" y="370.00" width="40.80" height="16.70" rx="2" fill="#fff" stroke="#cfcfcf" stroke-width="1"/>
<g transform="translate(626.50 375.10) scale(0.6900 0.6700)"><circle cx="5" cy="5" r="4.3" fill="none" stroke="#222" stroke-width="1.4"/><circle cx="5" cy="5" r="1.8" fill="none" stroke="#222" stroke-width="1.1"/><path d="M2 2 L3.7 3.7 M8 2 L6.3 3.7 M2 8 L3.7 6.3 M8 8 L6.3 6.3" stroke="#222" stroke-width="1.3"/></g>
</svg>
<div class="t" style="left:4.70px;top:6.98px;font-size:6.4px;letter-spacing:-0.311px;color:#fff;-webkit-text-stroke:0.22px #fff;word-spacing:0.5px;">Meus Favoritos</div>
<div class="t" style="left:60.60px;top:6.98px;font-size:6.4px;letter-spacing:-0.389px;color:#fff;-webkit-text-stroke:0.22px #fff;word-spacing:0.5px;">Adm. de Sistemas</div>
<div class="t" style="left:123.20px;top:6.98px;font-size:6.4px;letter-spacing:-0.334px;color:#fff;-webkit-text-stroke:0.22px #fff;word-spacing:0.5px;">Cadastros</div>
<div class="t" style="left:165.10px;top:6.98px;font-size:6.4px;letter-spacing:-0.251px;color:#fff;-webkit-text-stroke:0.22px #fff;word-spacing:0.5px;">Comercial</div>
<div class="t" style="left:207.30px;top:6.98px;font-size:6.4px;letter-spacing:-0.197px;color:#fff;-webkit-text-stroke:0.22px #fff;word-spacing:0.5px;">Estoque</div>
<div class="t" style="left:244.50px;top:6.98px;font-size:6.4px;letter-spacing:-0.262px;color:#fff;-webkit-text-stroke:0.22px #fff;word-spacing:0.5px;">Fisco-Contábil</div>
<div class="t" style="left:297.40px;top:6.98px;font-size:6.4px;letter-spacing:-0.231px;color:#fff;-webkit-text-stroke:0.22px #fff;word-spacing:0.5px;">Financeiro</div>
<div class="t" style="left:354.50px;top:6.98px;font-size:6.4px;letter-spacing:-0.168px;color:#fff;-webkit-text-stroke:0.22px #fff;word-spacing:0.5px;">Projetos</div>
<div class="t" style="left:392.20px;top:6.98px;font-size:6.4px;letter-spacing:-0.269px;color:#fff;-webkit-text-stroke:0.22px #fff;word-spacing:0.5px;">Inf. Gerenciais</div>
<div class="t" style="left:445.60px;top:6.98px;font-size:6.4px;letter-spacing:-0.404px;color:#fff;-webkit-text-stroke:0.22px #fff;word-spacing:0.5px;">Gestão de Pessoas</div>
<div class="t" style="left:511.10px;top:6.98px;font-size:6.4px;letter-spacing:-0.257px;color:#fff;-webkit-text-stroke:0.22px #fff;word-spacing:0.5px;">Produção</div>
<div class="t" style="left:552.00px;top:6.98px;font-size:6.4px;letter-spacing:-0.224px;color:#fff;-webkit-text-stroke:0.22px #fff;word-spacing:0.5px;">Relatórios</div>
<div class="t" style="left:594.20px;top:6.98px;font-size:6.4px;letter-spacing:-0.391px;color:#fff;-webkit-text-stroke:0.22px #fff;word-spacing:0.5px;">Vendas</div>
<div class="t" style="left:13.20px;top:25.64px;font-size:6.1px;letter-spacing:-0.545px;color:#ececec;-webkit-text-stroke:0.15px #ececec;word-spacing:0.4px;">CFOP - Natureza da Operacão</div>
<div class="t" style="left:92.50px;top:43.71px;font-size:7.2px;letter-spacing:-0.448px;color:#777;font-weight:bold;word-spacing:0.6px;">Tipo de Movimento</div>
<div class="t" style="left:164.70px;top:45.25px;font-size:7.5px;letter-spacing:-0.080px;color:#333;">Venda Pro Emprego - 555 - S</div>
<div class="t" style="left:572.60px;top:44.67px;font-size:7.0px;letter-spacing:-0.160px;color:#222;font-weight:bold;">Filtros:</div>
<div class="t" style="left:602.80px;top:45.58px;font-size:6.4px;letter-spacing:0.052px;color:#333;">Descricao ti</div>
<div class="t" style="left:656.10px;top:45.58px;font-size:6.4px;letter-spacing:0.158px;color:#333;">Contém</div>
<div class="t" style="left:759.40px;top:46.40px;font-size:6.5px;letter-spacing:-0.406px;color:#fff;-webkit-text-stroke:0.15px #fff;">Buscar</div>
<div class="t" style="left:25.60px;top:76.26px;font-size:6.9px;letter-spacing:-0.484px;color:#444;font-weight:bold;">PRINCIPAL</div>
<div class="t" style="left:74.70px;top:76.26px;font-size:6.9px;letter-spacing:-0.581px;color:#2d6f9f;font-weight:bold;word-spacing:0.8px;">REGRAS FISCAIS</div>
<div class="t" style="left:8.80px;top:97.57px;font-size:7.6px;letter-spacing:-0.305px;color:#333;font-weight:bold;word-spacing:1.0px;">CONTRIBUINTE?</div>
<div class="t" style="left:71.80px;top:97.57px;font-size:7.6px;letter-spacing:-0.624px;color:#333;font-weight:bold;word-spacing:1.0px;">TIPO DE LOCAL</div>
<div class="t" style="left:133.20px;top:97.57px;font-size:7.6px;letter-spacing:-0.868px;color:#333;font-weight:bold;word-spacing:1.0px;">TEM ST?</div>
<div class="t" style="left:167.10px;top:97.57px;font-size:7.6px;letter-spacing:-0.541px;color:#333;font-weight:bold;word-spacing:1.0px;">TEM PROTOCOLO?</div>
<div class="t" style="left:297.80px;top:97.57px;font-size:7.6px;letter-spacing:-0.837px;color:#333;font-weight:bold;word-spacing:1.0px;">CFOP</div>
<div class="t" style="left:425.00px;top:97.57px;font-size:7.6px;letter-spacing:-0.228px;color:#333;font-weight:bold;word-spacing:1.0px;">SIT.TRIBUTARIA</div>
<div class="t" style="left:536.00px;top:97.57px;font-size:7.6px;letter-spacing:-0.242px;color:#333;font-weight:bold;word-spacing:1.0px;">% DIF.ICMS</div>
<div class="t" style="left:644.20px;top:97.57px;font-size:7.6px;letter-spacing:-0.534px;color:#333;font-weight:bold;word-spacing:1.0px;">LEI ICMS</div>
<div class="t" style="left:769.50px;top:97.57px;font-size:7.6px;letter-spacing:-0.319px;color:#333;font-weight:bold;word-spacing:1.0px;">MOD.BC PIS/COFINS</div>
<div class="t" style="left:74.70px;top:114.88px;font-size:6.4px;letter-spacing:-0.129px;color:#4d4d4d;">Estadual</div>
<div class="t" style="left:241.00px;top:114.88px;font-size:6.4px;letter-spacing:-0.045px;color:#4d4d4d;">- codigo da Operação Fiscal -</div>
<div class="t" style="left:387.00px;top:114.88px;font-size:6.4px;letter-spacing:-0.028px;color:#4d4d4d;">- a Tributação pelo ICMS -</div>
<div class="t" style="left:592.80px;top:114.88px;font-size:6.4px;letter-spacing:-0.127px;color:#4d4d4d;">- Lei Fiscal -</div>
<div class="t" style="left:739.00px;top:114.88px;font-size:6.4px;letter-spacing:-0.048px;color:#4d4d4d;">- Modalidade de Base de Cálculo de PIS -</div>
<div class="t" style="left:74.70px;top:133.52px;font-size:6.4px;letter-spacing:-0.129px;color:#4d4d4d;">Estadual</div>
<div class="t" style="left:241.00px;top:133.52px;font-size:6.4px;letter-spacing:-0.045px;color:#4d4d4d;">- codigo da Operação Fiscal -</div>
<div class="t" style="left:387.00px;top:133.52px;font-size:6.4px;letter-spacing:-0.028px;color:#4d4d4d;">- a Tributação pelo ICMS -</div>
<div class="t" style="left:592.80px;top:133.52px;font-size:6.4px;letter-spacing:-0.127px;color:#4d4d4d;">- Lei Fiscal -</div>
<div class="t" style="left:739.00px;top:133.52px;font-size:6.4px;letter-spacing:-0.048px;color:#4d4d4d;">- Modalidade de Base de Cálculo de PIS -</div>
<div class="t" style="left:74.70px;top:152.16px;font-size:6.4px;letter-spacing:0.125px;color:#4d4d4d;">Interestadual</div>
<div class="t" style="left:241.00px;top:152.16px;font-size:6.4px;letter-spacing:-0.045px;color:#4d4d4d;">- codigo da Operação Fiscal -</div>
<div class="t" style="left:387.00px;top:152.16px;font-size:6.4px;letter-spacing:-0.028px;color:#4d4d4d;">- a Tributação pelo ICMS -</div>
<div class="t" style="left:592.80px;top:152.16px;font-size:6.4px;letter-spacing:-0.127px;color:#4d4d4d;">- Lei Fiscal -</div>
<div class="t" style="left:739.00px;top:152.16px;font-size:6.4px;letter-spacing:-0.048px;color:#4d4d4d;">- Modalidade de Base de Cálculo de PIS -</div>
<div class="t" style="left:74.70px;top:170.80px;font-size:6.4px;letter-spacing:0.125px;color:#4d4d4d;">Interestadual</div>
<div class="t" style="left:241.00px;top:170.80px;font-size:6.4px;letter-spacing:-0.045px;color:#4d4d4d;">- codigo da Operação Fiscal -</div>
<div class="t" style="left:387.00px;top:170.80px;font-size:6.4px;letter-spacing:-0.028px;color:#4d4d4d;">- a Tributação pelo ICMS -</div>
<div class="t" style="left:592.80px;top:170.80px;font-size:6.4px;letter-spacing:-0.127px;color:#4d4d4d;">- Lei Fiscal -</div>
<div class="t" style="left:739.00px;top:170.80px;font-size:6.4px;letter-spacing:-0.048px;color:#4d4d4d;">- Modalidade de Base de Cálculo de PIS -</div>
<div class="t" style="left:74.70px;top:189.44px;font-size:6.4px;letter-spacing:0.125px;color:#4d4d4d;">Interestadual</div>
<div class="t" style="left:241.00px;top:189.44px;font-size:6.4px;letter-spacing:-0.045px;color:#4d4d4d;">- codigo da Operação Fiscal -</div>
<div class="t" style="left:387.00px;top:189.44px;font-size:6.4px;letter-spacing:-0.028px;color:#4d4d4d;">- a Tributação pelo ICMS -</div>
<div class="t" style="left:592.80px;top:189.44px;font-size:6.4px;letter-spacing:-0.127px;color:#4d4d4d;">- Lei Fiscal -</div>
<div class="t" style="left:739.00px;top:189.44px;font-size:6.4px;letter-spacing:-0.048px;color:#4d4d4d;">- Modalidade de Base de Cálculo de PIS -</div>
<div class="t" style="left:74.70px;top:208.08px;font-size:6.4px;letter-spacing:-0.129px;color:#4d4d4d;">Estadual</div>
<div class="t" style="left:241.00px;top:208.08px;font-size:6.4px;letter-spacing:0.094px;color:#3c3c3c;">510201 - Venda de mercadoria adquirida o</div>
<div class="t" style="left:387.00px;top:208.08px;font-size:6.4px;letter-spacing:0.027px;color:#3c3c3c;">51 - Diferimento - S</div>
<div class="t" style="left:544.00px;top:208.03px;font-size:6.4px;letter-spacing:0.387px;color:#444;width:25.90px;overflow:hidden;">100.0000</div>
<div class="t" style="left:592.80px;top:208.08px;font-size:6.4px;letter-spacing:-0.127px;color:#3c3c3c;">- Lei Fiscal -</div>
<div class="t" style="left:739.00px;top:208.08px;font-size:6.4px;letter-spacing:0.004px;color:#3c3c3c;">01 - Operação Tributável (base de cálculo =</div>
<div class="t" style="left:74.70px;top:226.72px;font-size:6.4px;letter-spacing:-0.129px;color:#4d4d4d;">Estadual</div>
<div class="t" style="left:241.00px;top:226.72px;font-size:6.4px;letter-spacing:-0.045px;color:#4d4d4d;">- codigo da Operação Fiscal -</div>
<div class="t" style="left:387.00px;top:226.72px;font-size:6.4px;letter-spacing:-0.028px;color:#4d4d4d;">- a Tributação pelo ICMS -</div>
<div class="t" style="left:592.80px;top:226.72px;font-size:6.4px;letter-spacing:-0.127px;color:#4d4d4d;">- Lei Fiscal -</div>
<div class="t" style="left:739.00px;top:226.72px;font-size:6.4px;letter-spacing:-0.048px;color:#4d4d4d;">- Modalidade de Base de Cálculo de PIS -</div>
<div class="t" style="left:74.70px;top:245.36px;font-size:6.4px;letter-spacing:-0.129px;color:#4d4d4d;">Estadual</div>
<div class="t" style="left:241.00px;top:245.36px;font-size:6.4px;letter-spacing:-0.045px;color:#4d4d4d;">- codigo da Operação Fiscal -</div>
<div class="t" style="left:387.00px;top:245.36px;font-size:6.4px;letter-spacing:-0.028px;color:#4d4d4d;">- a Tributação pelo ICMS -</div>
<div class="t" style="left:592.80px;top:245.36px;font-size:6.4px;letter-spacing:-0.127px;color:#4d4d4d;">- Lei Fiscal -</div>
<div class="t" style="left:739.00px;top:245.36px;font-size:6.4px;letter-spacing:-0.048px;color:#4d4d4d;">- Modalidade de Base de Cálculo de PIS -</div>
<div class="t" style="left:74.70px;top:264.00px;font-size:6.4px;letter-spacing:0.125px;color:#4d4d4d;">Interestadual</div>
<div class="t" style="left:241.00px;top:264.00px;font-size:6.4px;letter-spacing:-0.045px;color:#4d4d4d;">- codigo da Operação Fiscal -</div>
<div class="t" style="left:387.00px;top:264.00px;font-size:6.4px;letter-spacing:-0.028px;color:#4d4d4d;">- a Tributação pelo ICMS -</div>
<div class="t" style="left:592.80px;top:264.00px;font-size:6.4px;letter-spacing:-0.127px;color:#4d4d4d;">- Lei Fiscal -</div>
<div class="t" style="left:739.00px;top:264.00px;font-size:6.4px;letter-spacing:-0.048px;color:#4d4d4d;">- Modalidade de Base de Cálculo de PIS -</div>
<div class="t" style="left:74.70px;top:282.64px;font-size:6.4px;letter-spacing:0.125px;color:#4d4d4d;">Interestadual</div>
<div class="t" style="left:241.00px;top:282.64px;font-size:6.4px;letter-spacing:-0.045px;color:#4d4d4d;">- codigo da Operação Fiscal -</div>
<div class="t" style="left:387.00px;top:282.64px;font-size:6.4px;letter-spacing:-0.028px;color:#4d4d4d;">- a Tributação pelo ICMS -</div>
<div class="t" style="left:592.80px;top:282.64px;font-size:6.4px;letter-spacing:-0.127px;color:#4d4d4d;">- Lei Fiscal -</div>
<div class="t" style="left:739.00px;top:282.64px;font-size:6.4px;letter-spacing:-0.048px;color:#4d4d4d;">- Modalidade de Base de Cálculo de PIS -</div>
<div class="t" style="left:74.70px;top:301.28px;font-size:6.4px;letter-spacing:0.125px;color:#4d4d4d;">Interestadual</div>
<div class="t" style="left:241.00px;top:301.28px;font-size:6.4px;letter-spacing:-0.045px;color:#4d4d4d;">- codigo da Operação Fiscal -</div>
<div class="t" style="left:387.00px;top:301.28px;font-size:6.4px;letter-spacing:-0.028px;color:#4d4d4d;">- a Tributação pelo ICMS -</div>
<div class="t" style="left:592.80px;top:301.28px;font-size:6.4px;letter-spacing:-0.127px;color:#4d4d4d;">- Lei Fiscal -</div>
<div class="t" style="left:739.00px;top:301.28px;font-size:6.4px;letter-spacing:-0.048px;color:#4d4d4d;">- Modalidade de Base de Cálculo de PIS -</div>
<div class="t" style="left:74.70px;top:319.92px;font-size:6.4px;letter-spacing:-0.007px;color:#4d4d4d;">Exterior</div>
<div class="t" style="left:241.00px;top:319.92px;font-size:6.4px;letter-spacing:-0.045px;color:#4d4d4d;">- codigo da Operação Fiscal -</div>
<div class="t" style="left:387.00px;top:319.92px;font-size:6.4px;letter-spacing:-0.028px;color:#4d4d4d;">- a Tributação pelo ICMS -</div>
<div class="t" style="left:592.80px;top:319.92px;font-size:6.4px;letter-spacing:-0.127px;color:#4d4d4d;">- Lei Fiscal -</div>
<div class="t" style="left:739.00px;top:319.92px;font-size:6.4px;letter-spacing:-0.048px;color:#4d4d4d;">- Modalidade de Base de Cálculo de PIS -</div>
<div class="t" style="left:241.00px;top:374.75px;font-size:7.5px;letter-spacing:0.080px;color:#333;">Menu</div>
<div class="t" style="left:283.70px;top:374.75px;font-size:7.5px;letter-spacing:0.068px;color:#fff;">Alterar</div>
<div class="t" style="left:328.80px;top:374.75px;font-size:7.5px;letter-spacing:-0.117px;color:#fff;">Excluir</div>
<div class="t" style="left:375.90px;top:374.75px;font-size:7.5px;letter-spacing:0.095px;color:#fff;">Limpar</div>
<div class="t" style="left:425.00px;top:374.75px;font-size:7.5px;letter-spacing:-0.002px;color:#333;">Relatório</div>
<div class="t" style="left:479.00px;top:374.75px;font-size:7.5px;letter-spacing:0.030px;color:#333;">Follow-Up</div>
<div class="t" style="left:537.20px;top:374.75px;font-size:7.5px;letter-spacing:0.078px;color:#333;">Histórico</div>
<div class="t" style="left:591.50px;top:374.75px;font-size:7.5px;letter-spacing:0.064px;color:#333;">Voltar</div>
<div class="t" style="left:635.40px;top:374.75px;font-size:7.5px;letter-spacing:0.004px;color:#333;">Ajuda</div>
</body></html>
